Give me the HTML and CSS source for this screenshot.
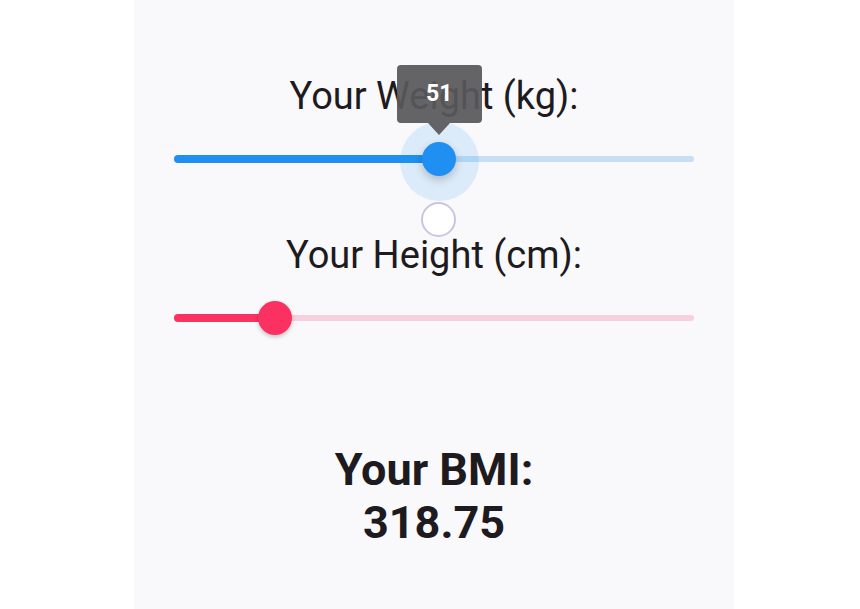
FILE: index.html
```
<!DOCTYPE html>
<html>
<head>
<meta charset="utf-8">
<link rel="stylesheet" href="styles.css">
</head>
<body>
<div class="panel">
  <div class="label label-weight">Your Weight (kg):</div>
  <div class="slider slider-blue" style="--v: 50.9%;">
    <div class="track-inactive"></div>
    <div class="track-active"></div>
    <div class="halo"></div>
    <div class="thumb"></div>
    <div class="tooltip"><span>51</span></div>
  </div>
  <div class="focus-row"><div class="focus-circle"></div></div>
  <div class="label">Your Height (cm):</div>
  <div class="slider slider-pink" style="--v: 19.5%;">
    <div class="track-inactive"></div>
    <div class="track-active"></div>
    <div class="thumb"></div>
  </div>
  <div class="result">
    <div class="result-title">Your BMI:</div>
    <div class="result-value">318.75</div>
  </div>
</div>
</body>
</html>
```
FILE: styles.css
```
html, body {
  margin: 0;
  padding: 0;
  background: #ffffff;
}
body {
  font-family: Roboto, "Liberation Sans", sans-serif;
  color: #1d1b20;
}
.panel {
  width: 600px;
  height: 609px;
  margin-left: 134px;
  background: #f9f8fb;
  box-sizing: border-box;
  padding: 76px 40px 0;
  display: flex;
  flex-direction: column;
}
.label {
  font-size: 38px;
  line-height: 40px;
  text-align: center;
  white-space: nowrap;
}
.slider {
  position: relative;
  height: 40px;
  margin-top: 23px;
}
.label + .slider-pink { margin-top: 23px; }
.track-inactive {
  position: absolute;
  left: 0;
  right: 0;
  top: 17px;
  height: 6px;
  border-radius: 3px;
}
.track-active {
  position: absolute;
  left: 0;
  width: var(--v);
  top: 16px;
  height: 8px;
  border-radius: 4px;
}
.thumb {
  position: absolute;
  left: var(--v);
  top: 3px;
  width: 34px;
  height: 34px;
  margin-left: -17px;
  border-radius: 50%;
  box-shadow: 0 2px 4px rgba(0, 0, 0, 0.22);
}
.halo {
  position: absolute;
  left: var(--v);
  top: -17px;
  width: 79px;
  height: 79px;
  margin-left: -39px;
  border-radius: 50%;
  background: rgba(33, 150, 243, 0.13);
}
.slider-blue .track-inactive { background: #c5dff7; }
.slider-blue .track-active { background: #1f8ff1; }
.slider-blue .thumb {
  background: #1f8ff1;
  box-shadow: 0 4px 8px rgba(0, 0, 0, 0.2);
}
.slider-pink .track-inactive { background: #f6d0da; }
.slider-pink .track-active { background: #fa3161; }
.slider-pink .thumb { background: #fa3161; }
.tooltip {
  position: absolute;
  left: var(--v);
  top: -74px;
  width: 85px;
  height: 58px;
  margin-left: -42px;
  border-radius: 4px;
  background: rgba(88, 88, 90, 0.93);
  color: #ffffff;
  font-size: 23px;
  font-weight: 700;
  display: flex;
  align-items: center;
  justify-content: center;
  padding-bottom: 2px;
  box-sizing: border-box;
}
.tooltip::after {
  content: "";
  position: absolute;
  left: 50%;
  top: 58px;
  margin-left: -11px;
  border-left: 11px solid transparent;
  border-right: 11px solid transparent;
  border-top: 12px solid rgba(88, 88, 90, 0.93);
}
.focus-row {
  height: 56px;
  display: flex;
  justify-content: center;
}
.focus-circle {
  margin-top: 23px;
  margin-left: 8px;
  width: 35px;
  height: 35px;
  box-sizing: border-box;
  border-radius: 50%;
  border: 2px solid #c9c6e0;
  background: #ffffff;
}
.result {
  margin-top: 105px;
  text-align: center;
  font-weight: 700;
  font-size: 45px;
  line-height: 53px;
}
```
